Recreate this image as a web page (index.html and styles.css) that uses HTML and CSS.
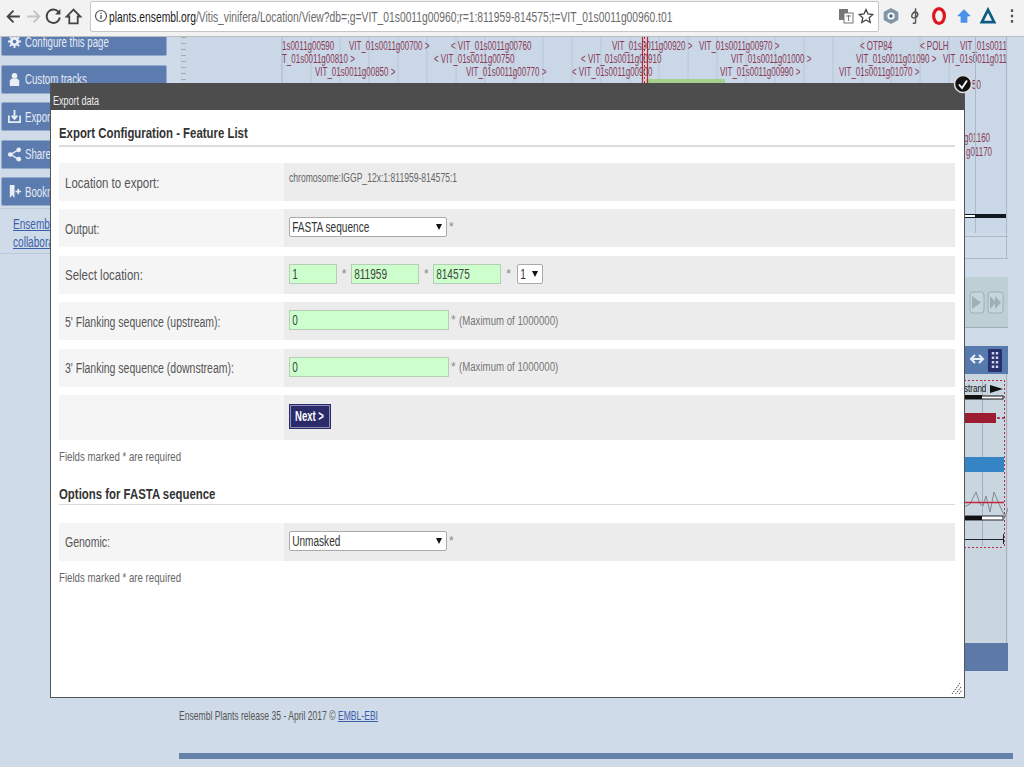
FILE: index.html
```html
<!DOCTYPE html>
<html lang="en">
<head>
<meta charset="utf-8">
<title>Ensembl Plants - Export data</title>
<link rel="stylesheet" href="styles.css">
</head>
<body>
<div class="app">
  <header class="toolbar">
    <div class="nav-icons">
      <svg class="nav-icon" viewBox="0 0 18 18"><path d="M15 9H4M9 3.5 3.5 9 9 14.5" fill="none" stroke="#444" stroke-width="1.8"/></svg>
      <svg class="nav-icon" viewBox="0 0 18 18"><path d="M3 9h11M9 3.5 14.5 9 9 14.5" fill="none" stroke="#c4c4c4" stroke-width="1.8"/></svg>
      <svg class="nav-icon" viewBox="0 0 18 18"><path d="M14.5 6A6.3 6.3 0 1 0 15 10" fill="none" stroke="#444" stroke-width="1.8"/><path d="M15.5 2v5h-5z" fill="#444"/></svg>
      <svg class="nav-icon" viewBox="0 0 18 18"><path d="M9 2.5 2.5 9H5v6.5h8V9h2.500z" fill="none" stroke="#444" stroke-width="1.7"/></svg>
    </div>
    <div class="omnibox">
      <svg class="info" viewBox="0 0 14 14"><circle cx="7" cy="7" r="5.500" fill="none" stroke="#555" stroke-width="1.200"/><path d="M7 6v4M7 3.800v1.200" stroke="#555" stroke-width="1.300"/></svg>
      <div class="url"><span class="url-text"><b>plants.ensembl.org</b>/Vitis_vinifera/Location/View?db=;g=VIT_01s0011g00960;r=1:811959-814575;t=VIT_01s0011g00960.t01</span></div>
      <svg class="omni-icon" viewBox="0 0 16 16"><rect x="1" y="1" width="9" height="11" fill="#777"/><rect x="6" y="5" width="9" height="10" fill="#fff" stroke="#777"/><path d="M8 8h5M10.500 7v6" stroke="#777"/></svg>
      <svg class="omni-icon" viewBox="0 0 16 16"><path d="M8 1.500 10 6l4.800.5-3.600 3.200 1 4.800L8 12l-4.200 2.500 1-4.800L1.200 6.500 6 6z" fill="none" stroke="#444" stroke-width="1.300"/></svg>
    </div>
    <div class="extensions">
      <svg class="ext" viewBox="0 0 16 16"><path d="M8 .8 14.500 4.400v7.200L8 15.200 1.500 11.600V4.400z" fill="#8295a5"/><circle cx="8" cy="8" r="3.200" fill="#fff"/><circle cx="8" cy="8" r="1.600" fill="#4a6a85"/></svg>
      <svg class="ext" viewBox="0 0 16 16"><path d="M8.500 1v13.500M6 14.500h2.500M5.500 6c3-3 5.500-1 4.800 1.500s-5 3-5.300.7 3-3.700 3.500-5.200" fill="none" stroke="#555" stroke-width="1.300"/></svg>
      <svg class="ext" viewBox="0 0 16 16"><ellipse cx="8" cy="8" rx="4.800" ry="6.600" fill="none" stroke="#e0141e" stroke-width="2.800"/></svg>
      <svg class="ext" viewBox="0 0 16 16"><path d="M8 2 14 8l-3 .5V14H5V8.500L2 8z" fill="#4a90e8"/></svg>
      <svg class="ext" viewBox="0 0 16 16"><path d="M8 2.500 13.500 13.500h-11z" fill="none" stroke="#0e5c86" stroke-width="2.400"/></svg>
      <svg class="ext" viewBox="0 0 16 16"><path d="M8 2v2.400M8 6.800v2.400M8 11.600V14" stroke="#555" stroke-width="2"/></svg>
    </div>
  </header>

  <div class="page">
    <div class="columns">
      <aside class="sidebar">
        <a class="side-btn">
          <svg class="side-icon" viewBox="0 0 16 16"><circle cx="8" cy="8" r="3.500" fill="none" stroke="#e9eef5" stroke-width="3"/><path d="M8 1v3M8 12v3M1 8h3M12 8h3M3 3l2 2M11 11l2 2M13 3l-2 2M5 11l-2 2" stroke="#e9eef5" stroke-width="2"/></svg>
          <span class="side-text">Configure this page</span>
        </a>
        <a class="side-btn">
          <svg class="side-icon" viewBox="0 0 16 16"><circle cx="8" cy="4" r="3" fill="#e9eef5"/><path d="M3 15V9l2-2h6l2 2v6z" fill="#e9eef5"/></svg>
          <span class="side-text">Custom tracks</span>
        </a>
        <a class="side-btn">
          <svg class="side-icon" viewBox="0 0 16 16"><path d="M2 7v7h12V7" fill="none" stroke="#e9eef5" stroke-width="1.800"/><path d="M8 1v9M5 7l3 3.500L11 7" fill="none" stroke="#e9eef5" stroke-width="2"/></svg>
          <span class="side-text">Export data</span>
        </a>
        <a class="side-btn">
          <svg class="side-icon" viewBox="0 0 16 16"><path d="M12 3 4 8l8 5" fill="none" stroke="#e9eef5" stroke-width="1.500"/><circle cx="12.500" cy="3" r="2.500" fill="#e9eef5"/><circle cx="3.500" cy="8" r="2.500" fill="#e9eef5"/><circle cx="12.500" cy="13" r="2.500" fill="#e9eef5"/></svg>
          <span class="side-text">Share this page</span>
        </a>
        <a class="side-btn">
          <svg class="side-icon" viewBox="0 0 16 16"><path d="M3 1h5v14l-2.500-3L3 15z" fill="#e9eef5"/><path d="M9 8h6M12 5v6" stroke="#e9eef5" stroke-width="1.800"/></svg>
          <span class="side-text">Bookmark this page</span>
        </a>
        <div class="side-note"><a class="side-link">Ensembl Plants is a</a><a class="side-link">collaboration</a></div>
      </aside>

      <main class="tracks">
        <svg class="track-svg" viewBox="180 37 828 634" xmlns="http://www.w3.org/2000/svg">
          <rect x="180" y="37" width="828" height="196" fill="#c9d7e6"/>
          <path d="M183.500 37V233" stroke="#9fb0a8" stroke-width="5" stroke-dasharray="1 5"/>
          <path d="M311 37v46M340 37v46M369 37v46M398 37v46M427 37v46M456 37v46M485 37v46M514 37v46M543 37v46M572 37v46M601 37v46M630 37v46M659 37v46M688 37v46M717 37v46M746 37v46M775 37v46M804 37v46M833 37v46M862 37v46M891 37v46M920 37v46M949 37v46" stroke="#b8c7d8"/>
          <path d="M282 37V83" stroke="#a9b9cb"/>
          <rect x="646" y="79" width="79" height="6" fill="#a7d08c"/>
          <path d="M642.500 37V84M647.500 37V84" stroke="#c4222c" stroke-width="1.200"/>
          <path d="M644.500 37V84" stroke="#c4222c" stroke-dasharray="2 2"/>
          <g class="gene">
            <text x="282" y="50">1s0011g00590</text>
            <text x="349" y="50">VIT_01s0011g00700 &gt;</text>
            <text x="451" y="50">&lt; VIT_01s0011g00760</text>
            <text x="612" y="50">VIT_01s0011g00920 &gt;</text>
            <text x="699" y="50">VIT_01s0011g00970 &gt;</text>
            <text x="860" y="50">&lt; OTP84</text>
            <text x="920" y="50">&lt; POLH</text>
            <text x="960" y="50">VIT_01s0011</text>
            <text x="282" y="63">T_01s0011g00810 &gt;</text>
            <text x="434" y="63">&lt; VIT_01s0011g00750</text>
            <text x="581" y="63">&lt; VIT_01s0011g00910</text>
            <text x="731" y="63">VIT_01s0011g01000 &gt;</text>
            <text x="856" y="63">VIT_01s0011g01090 &gt;</text>
            <text x="943" y="63">VIT_01s0011g011</text>
            <text x="315" y="76">VIT_01s0011g00850 &gt;</text>
            <text x="466" y="76">VIT_01s0011g00770 &gt;</text>
            <text x="572" y="76">&lt; VIT_01s0011g00900</text>
            <text x="720" y="76">VIT_01s0011g00990 &gt;</text>
            <text x="839" y="76">VIT_01s0011g01070 &gt;</text>
            <text x="972" y="89">50</text>
            <text x="964" y="142">g01160</text>
            <text x="966" y="156">g01170</text>
          </g>
          <path d="M975.500 37V233M1006.500 37V259" stroke="#a9b9cb"/>
          <rect x="964" y="214" width="42" height="4" fill="#101820"/>
          <rect x="964" y="215" width="11" height="2" fill="#fff"/>
          <path d="M964 236.500H1008M964 258.500H1008" stroke="#a9b9cb"/>
          <rect x="964" y="277" width="44" height="51" fill="#bed0d6"/>
          <path d="M964 327.500H1008" stroke="#9fb0bd"/>
          <rect x="970" y="292" width="14" height="21" rx="3" fill="#c7d6da" stroke="#9db0b8"/>
          <rect x="988" y="292" width="15" height="21" rx="3" fill="#c7d6da" stroke="#9db0b8"/>
          <path d="M972 296l9 6.500-9 6.500z" fill="#9db0b8"/>
          <path d="M990 296l6 6.500-6 6.500zM995 296l6 6.500-6 6.500z" fill="#9db0b8"/>
          <rect x="964" y="346" width="44" height="28" fill="#567aae"/>
          <path d="M972 359h10M975 355l-4 4 4 4M979 355l4 4-4 4" fill="none" stroke="#e9f0f8" stroke-width="2"/>
          <rect x="988" y="349" width="14" height="23" rx="1" fill="#28306e"/>
          <path d="M993 352v18M997 352v18" stroke="#c8d4e6" stroke-width="2.500" stroke-dasharray="2.500 2"/>
          <rect x="964" y="374" width="44" height="269" fill="#cad6df"/>
          <path d="M1006.500 374V643" stroke="#a5b0ba"/>
          <path d="M982.500 380V546" stroke="#a3afb9"/>
          <path d="M1004.500 380V547M964 547.500H1004M964 380.500H1004" stroke="#b4304a" stroke-dasharray="2 2"/>
          <text class="strand" x="964" y="392">strand</text>
          <path d="M990 385l13 4-13 4z" fill="#111"/>
          <rect x="964" y="396" width="39" height="3" fill="#fff" stroke="#111"/>
          <rect x="964" y="395" width="18" height="4" fill="#111"/>
          <rect x="964" y="413" width="32" height="10" fill="#9c1c30"/>
          <path d="M997 418h8" stroke="#9c1c30" stroke-dasharray="3 2" stroke-width="1.500"/>
          <rect x="964" y="457" width="40" height="15" fill="#3484c6"/>
          <path d="M964 507l6-3 6-12 4 12 3 2 3-10 4 16 4-20 5 12 6 13 5-14" fill="none" stroke="#7e8a94"/>
          <path d="M964 502.500H1004" stroke="#c2263a" stroke-width="1.300"/>
          <rect x="964" y="516" width="39" height="4" fill="#fff" stroke="#223"/>
          <rect x="964" y="516" width="18" height="4" fill="#111"/>
          <path d="M964 539.500H1003M1003.500 534V544" stroke="#223"/>
          <rect x="964" y="643" width="44" height="28" fill="#5c79a8"/>
        </svg>
      </main>
    </div>
    <footer class="footer">
      <p class="release"><span class="release-text">Ensembl Plants release 35 - April 2017 © <a>EMBL-EBI</a></span></p>
      <div class="footer-bar"></div>
    </footer>
  </div>

  <section class="modal">
    <h2 class="modal-title"><span class="title-text">Export data</span></h2>
    <div class="modal-body">
      <h3 class="heading"><span class="narrow head-text">Export Configuration - Feature List</span></h3>
      <div class="row">
        <div class="row-label"><span class="narrow wider">Location to export:</span></div>
        <div class="row-field plain"><span class="chrom">chromosome:IGGP_12x:1:811959-814575:1</span></div>
      </div>
      <div class="row">
        <div class="row-label"><span class="narrow">Output:</span></div>
        <div class="row-field">
          <div class="select wide"><select><option>FASTA sequence</option></select></div>
          <span class="hint">*</span>
        </div>
      </div>
      <div class="row">
        <div class="row-label"><span class="narrow wider">Select location:</span></div>
        <div class="row-field">
          <div class="input short"><input value="1"></div><span class="hint gap">*</span>
          <div class="input mid"><input value="811959"></div><span class="hint gap">*</span>
          <div class="input mid"><input value="814575"></div><span class="hint gap">*</span>
          <div class="select tiny"><select><option>1</option></select></div>
        </div>
      </div>
      <div class="row">
        <div class="row-label"><span class="narrow">5' Flanking sequence (upstream):</span></div>
        <div class="row-field"><div class="input long"><input value="0"></div><span class="hint">*</span><span class="max">(Maximum of 1000000)</span></div>
      </div>
      <div class="row">
        <div class="row-label"><span class="narrow">3' Flanking sequence (downstream):</span></div>
        <div class="row-field"><div class="input long"><input value="0"></div><span class="hint">*</span><span class="max">(Maximum of 1000000)</span></div>
      </div>
      <div class="row row-tall">
        <div class="row-label"></div>
        <div class="row-field"><button class="next"><span class="next-text">Next &gt;</span></button></div>
      </div>
      <p class="note"><span class="note-text">Fields marked * are required</span></p>
      <h3 class="heading second"><span class="narrow head-text">Options for FASTA sequence</span></h3>
      <div class="row">
        <div class="row-label"><span class="narrow">Genomic:</span></div>
        <div class="row-field">
          <div class="select wide"><select><option>Unmasked</option></select></div>
          <span class="hint">*</span>
        </div>
      </div>
      <p class="note"><span class="note-text">Fields marked * are required</span></p>
    </div>
    <svg class="grip" viewBox="0 0 11 13"><path d="M1 12 9 1M4.500 12 10 5M8 12l2.500-3.500" stroke="#444" stroke-dasharray="1.500 1"/></svg>
    <svg class="badge" viewBox="0 0 20 20"><circle cx="10" cy="10" r="8.500" fill="#111" stroke="#ddd" stroke-width="1.500"/><path d="M6 10.500l3 3.500 5-7.500" fill="none" stroke="#fff" stroke-width="1.800"/></svg>
  </section>
</div>
</body>
</html>
```
FILE: styles.css
```css
* { box-sizing: border-box; }
html, body { margin: 0; height: 100%; }
body {
  font-family: "Liberation Sans", Arial, sans-serif;
  font-size: 14px;
  color: #555;
  overflow: hidden;
}
.app { position: relative; width: 1024px; height: 767px; overflow: hidden; background: #cfdbe8; }

/* The reference text is horizontally condensed: each text span is squeezed from its left edge. */
.narrow, .chrom, .max, .note-text, .url-text, .side-text, .side-link, .title-text, .release-text, .next-text {
  display: inline-block;
  white-space: nowrap;
  transform-origin: 0 50%;
}
.narrow { transform: scaleX(.75); }
.narrow.wider { transform: scaleX(.82); }
.narrow.head-text { transform: scaleX(.76); }

.toolbar {
  height: 37px;
  display: flex;
  align-items: center;
  background: #f2f2f2;
  border-bottom: 1px solid #b9bcc0;
}
.nav-icons { width: 90px; padding-left: 4px; margin-top: -4px; display: flex; }
.nav-icon { width: 19px; height: 19px; margin-right: 1px; }
.omnibox {
  width: 789px;
  height: 31px;
  margin-top: -4px;
  display: flex;
  align-items: center;
  padding: 0 0 0 3px;
  background: #fff;
  border: 1px solid #c6c6c6;
  border-radius: 2px;
}
.info { width: 14px; height: 14px; flex: none; }
.url { flex: 1; min-width: 0; margin-left: 1px; padding-top: 1px; font-size: 14.5px; color: #6b6b6b; }
.url-text { transform: scaleX(.71); }
.url b { font-weight: normal; color: #1c1c1c; }
.omni-icon { width: 16px; height: 16px; margin-right: 4px; flex: none; }
.extensions { flex: 1; display: flex; margin-top: -4px; padding: 0 3px 0 3px; justify-content: space-between; }
.ext { width: 18px; height: 18px; }

.page { height: 730px; display: flex; flex-direction: column; overflow: hidden; }
.columns { display: flex; height: 634px; flex: none; }
.sidebar { width: 180px; flex: none; margin-top: -10px; padding-left: 1px; }
.side-btn {
  display: flex;
  align-items: center;
  gap: 3px;
  width: 166px;
  height: 29px;
  margin-bottom: 8.5px;
  padding-left: 5px;
  color: #e4ebf4;
  font-size: 14px;
  background: #5c7cb0;
  border: 1px solid #92a9c9;
  border-radius: 2px;
  overflow: hidden;
}
.side-text { transform: scaleX(.69); }
.side-icon { width: 15px; height: 15px; flex: none; }
.side-note {
  margin: -7px 0 0 -1px;
  width: 180px;
  padding: 6px 0 2px 13px;
  font-size: 14px;
  line-height: 18px;
  border-top: 1px solid #b9c8da;
  border-bottom: 1px solid #b9c8da;
}
.side-link { display: block; width: max-content; color: #3a5ea8; text-decoration: underline; transform: scaleX(.72); }

.tracks { width: 828px; flex: none; }
.track-svg { display: block; width: 828px; height: 634px; }
.gene text, .strand { transform-box: fill-box; transform-origin: 0 50%; }
.gene text { font-size: 12px; fill: #8a3a55; transform: scaleX(.665); }
.strand { font-size: 11.5px; fill: #111; transform: scaleX(.7); }

.footer { padding: 0 11px 0 179px; }
.release { margin: 37px 0 0; font-size: 13px; line-height: 16px; color: #555; }
.release-text { transform: scaleX(.66); }
.release a { color: #3a5ea8; text-decoration: underline; }
.footer-bar { height: 6px; margin-top: 29px; background: #6682ab; }

.modal {
  position: absolute;
  left: 50px;
  top: 83px;
  width: 915px;
  height: 615px;
  background: #fff;
  border: 1px solid #555;
  border-width: 0 1px 1px 1px;
}
.modal-title {
  margin: 0;
  height: 27px;
  padding: 11px 0 0 2px;
  background: #4d4d4d;
  color: #eee;
  font-size: 12.5px;
  line-height: 14px;
  font-weight: normal;
}
.title-text { transform: scaleX(.72); }
.modal-body { padding: 14px 9px 0 8px; }
.heading {
  margin: 0 0 16px;
  height: 23px;
  font-size: 15px;
  line-height: 17px;
  color: #333;
  font-weight: bold;
  border-bottom: 2px solid #dcdcdc;
}
.heading.second { margin-top: 20px; margin-bottom: 18px; height: 20px; border-bottom: 1px solid #d5dbe0; }
.row { display: flex; height: 38px; margin-bottom: 8.4px; background: #f5f5f5; }
.row-tall { height: 45px; margin-bottom: 0; }
.row-label { width: 225px; flex: none; padding-left: 6px; display: flex; align-items: center; padding-top: 1px; color: #555; }
.row-field { flex: 1; min-width: 0; display: flex; align-items: center; padding: 0 0 2px 5px; background: #ececec; }
.row-field.plain { padding-bottom: 9px; color: #666; font-size: 13.5px; }
.chrom { transform: scaleX(.635); }
.hint { margin-left: 2px; color: #888; font-size: 12px; }
.hint.gap { width: 14.2px; margin: 0; text-align: center; }
.max { margin-left: 3px; color: #777; font-size: 13.5px; transform: scaleX(.715); }
.input {
  height: 20px;
  overflow: hidden;
  background: #ccffcc;
  border: 1px solid #b6cdb6;
}
.input input {
  display: block;
  width: 139%;
  height: 18px;
  padding: 0 3px;
  font: inherit;
  color: #444;
  background: transparent;
  border: 0;
  transform: scaleX(.72);
  transform-origin: 0 50%;
}
.short { width: 48px; }
.mid { width: 68px; }
.long { width: 160px; }
.select { position: relative; height: 20px; background: #fff; border: 1px solid #aaa; border-radius: 2px; overflow: hidden; }
.select::after {
  content: "";
  position: absolute;
  right: 4px;
  top: 6px;
  border: 3.500px solid transparent;
  border-top: 6px solid #111;
  border-bottom: 0;
}
.select select {
  appearance: none;
  display: block;
  width: 139%;
  height: 18px;
  padding: 0 3px;
  font: inherit;
  color: #333;
  background: transparent;
  border: 0;
  transform: scaleX(.72);
  transform-origin: 0 50%;
}
.wide { width: 158px; }
.tiny { width: 26px; margin-left: 1px; }
.next {
  width: 42px;
  height: 25px;
  padding: 0;
  font: inherit;
  font-weight: bold;
  color: #fff;
  background: #2b2b6b;
  border: 1px solid #2b2b6b;
  box-shadow: inset 0 0 0 1px #8f8fb5;
  text-align: left;
}
.next-text { margin-left: 5px; transform: scaleX(.68); }
.note { margin: 9px 0 0; line-height: 16px; color: #666; font-size: 13.5px; }
.note-text { transform: scaleX(.717); }
.grip { position: absolute; right: 2px; bottom: 2px; width: 11px; height: 13px; }
.badge { position: absolute; right: -9px; top: -9px; width: 20px; height: 20px; }
```
